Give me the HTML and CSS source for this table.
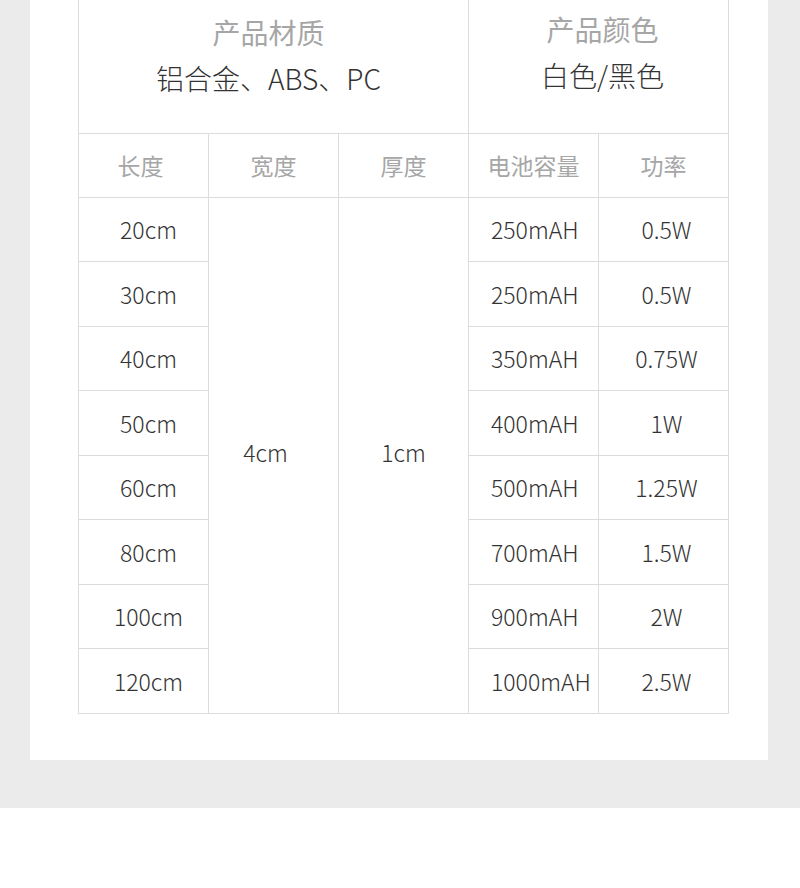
FILE: index.html
```html
<!DOCTYPE html>
<html lang="zh-CN">
<head>
<meta charset="utf-8">
<title>产品参数</title>
<link rel="stylesheet" href="styles.css">
</head>
<body>
<div class="page">
  <div class="card">
    <table class="spec">
      <colgroup>
        <col class="c"><col class="c"><col class="c"><col class="c"><col class="c">
      </colgroup>
      <tr class="top">
        <td colspan="3" class="top-cell left-top">
          <div class="t-label">产品材质</div>
          <div class="t-value">铝合金、ABS、PC</div>
        </td>
        <td colspan="2" class="top-cell right-top">
          <div class="t-label">产品颜色</div>
          <div class="t-value">白色/黑色</div>
        </td>
      </tr>
      <tr class="head">
        <th class="h-len">长度</th><th>宽度</th><th>厚度</th><th>电池容量</th><th>功率</th>
      </tr>
      <tr class="row">
        <td class="len">20cm</td>
        <td rowspan="8" class="span w">4cm</td>
        <td rowspan="8" class="span">1cm</td>
        <td class="cap">250mAH</td>
        <td class="pow">0.5W</td>
      </tr>
      <tr class="row"><td class="len">30cm</td><td class="cap">250mAH</td><td class="pow">0.5W</td></tr>
      <tr class="row"><td class="len">40cm</td><td class="cap">350mAH</td><td class="pow">0.75W</td></tr>
      <tr class="row"><td class="len">50cm</td><td class="cap">400mAH</td><td class="pow">1W</td></tr>
      <tr class="row"><td class="len">60cm</td><td class="cap">500mAH</td><td class="pow">1.25W</td></tr>
      <tr class="row"><td class="len">80cm</td><td class="cap">700mAH</td><td class="pow">1.5W</td></tr>
      <tr class="row"><td class="len">100cm</td><td class="cap">900mAH</td><td class="pow">2W</td></tr>
      <tr class="row"><td class="len">120cm</td><td class="cap">1000mAH</td><td class="pow">2.5W</td></tr>
    </table>
  </div>
</div>
</body>
</html>
```

FILE: styles.css
```css
html, body {
  margin: 0;
  padding: 0;
  background: #ffffff;
  font-family: "Noto Sans CJK SC", "Noto Sans", sans-serif;
}

.page {
  background: #ebebeb;
  padding: 0 32px 48px 30px;
}

.card {
  background: #ffffff;
  height: 760px;
  box-sizing: border-box;
  padding-left: 48px;
}

.spec {
  border-collapse: collapse;
  table-layout: fixed;
  width: 651px;
}

.spec .c {
  width: 130px;
}

.spec td,
.spec th {
  border: 1px solid #dcdcdc;
  padding: 0;
  text-align: center;
  vertical-align: middle;
}

.top-cell {
  border-top: none !important;
  height: 133px;
  vertical-align: top !important;
  box-sizing: border-box;
}

.left-top {
  padding: 9px 10px 0 0 !important;
}

.right-top {
  padding: 6px 0 0 8px !important;
  border-left-color: #d4d4d4 !important;
}

.t-label {
  font-size: 28px;
  line-height: 46px;
  font-weight: 400;
  color: #a6a6a6;
}

.t-value {
  font-size: 28px;
  line-height: 46px;
  font-weight: 300;
  color: #333333;
}

.head th {
  height: 63px;
  font-size: 23px;
  font-weight: 400;
  color: #a6a6a6;
}

.head th.h-len {
  padding-right: 6px;
}

.row td {
  height: 64.5px;
  box-sizing: border-box;
  font-size: 23px;
  font-weight: 300;
  color: #333333;
}

.row td.len {
  padding-left: 10px;
}

.row td.span {
  padding-bottom: 6px;
}

.row td.w {
  padding-right: 16px;
}

.row td.cap {
  text-align: left;
  padding-left: 22px;
}

.row td.pow {
  padding-left: 6px;
}
```
